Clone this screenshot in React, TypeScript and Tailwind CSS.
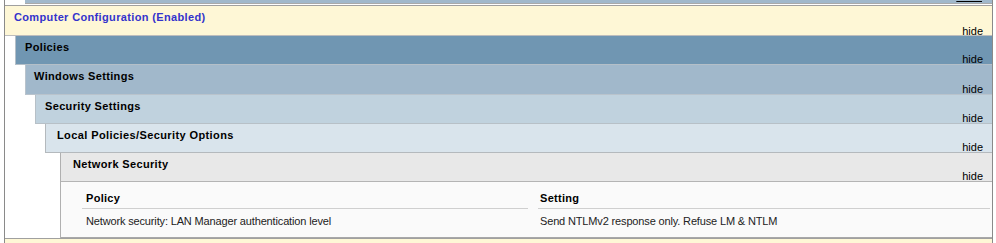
export default function App() {
  return (
    <div className="h-[243px] w-[996px] overflow-hidden bg-white font-['Liberation_Sans',Arial,sans-serif] text-[11px] text-black">
      <div className="ml-[4px] h-full w-[989px] border-x border-[#8a8a8a]">
        {/* tail of the section above */}
        <div className="ml-[20px] flex h-[4px] items-end justify-end overflow-hidden border-b border-[#a9a9a9] bg-[#a1b8cb] pr-[10px]">
          <span className="leading-[13px] underline">show</span>
        </div>
        <div className="h-[1px]" />

        {/* Computer Configuration */}
        <div className="border-t border-[#a0a0a0]">
          <div className="flex h-[30px] flex-col border-b border-[#bdbdbd] bg-[#fef7d6] pl-[9px] pr-[9px] pt-[5px]">
            <div className="font-bold leading-[13px] tracking-[0.35px] text-[#3333cc]">Computer Configuration (Enabled)</div>
            <div className="-mb-[1px] mt-auto self-end leading-[10px]">hide</div>
          </div>

          <div className="pl-[10px]">
            <div className="flex h-[29px] flex-col border-b border-l border-[#b4bfc8] bg-[#7096b2] pl-[9px] pr-[9px] pt-[5px]">
              <div className="font-bold leading-[13px] tracking-[0.35px]">Policies</div>
              <div className="mt-auto self-end leading-[10px]">hide</div>
            </div>

            <div className="pl-[10px]">
              <div className="flex h-[30px] flex-col border-b border-l border-[#b9c3cc] bg-[#a1b8cb] pl-[8px] pr-[9px] pt-[5px]">
                <div className="font-bold leading-[13px] tracking-[0.35px]">Windows Settings</div>
                <div className="mt-auto self-end leading-[10px]">hide</div>
              </div>

              <div className="pl-[10px]">
                <div className="flex h-[29px] flex-col border-b border-l border-[#b7c0c7] bg-[#c0d2de] pl-[9px] pr-[9px] pt-[5px]">
                  <div className="font-bold leading-[13px] tracking-[0.35px]">Security Settings</div>
                  <div className="mt-auto self-end leading-[10px]">hide</div>
                </div>

                <div className="pl-[10px]">
                  <div className="flex h-[29px] flex-col border-b border-l border-[#b4b9bd] bg-[#d9e4ec] pl-[11px] pr-[9px] pt-[5px]">
                    <div className="font-bold leading-[13px] tracking-[0.4px]">Local Policies/Security Options</div>
                    <div className="mt-auto self-end leading-[10px]">hide</div>
                  </div>

                  <div className="pl-[15px]">
                    <div className="border-l border-[#b0b0b0]">
                      <div className="flex h-[29px] flex-col border-b border-[#b4b4b4] bg-[#e8e8e8] pl-[12px] pr-[9px] pt-[5px]">
                        <div className="font-bold leading-[13px] tracking-[0.35px]">Network Security</div>
                        <div className="mt-auto self-end leading-[10px]">hide</div>
                      </div>

                      <div className="h-[56px] border-b border-[#a8a8a8] bg-[#fafafa] pl-[21px] pt-[10px]">
                        <div className="grid grid-cols-[446px_452px] gap-x-[10px] leading-[13px]">
                          <div className="border-b border-[#cfcfcf] pb-[3px] pl-[4px] font-bold tracking-[0.3px]">Policy</div>
                          <div className="border-b border-[#cfcfcf] pb-[3px] pl-[2px] font-bold tracking-[0.3px]">Setting</div>
                          <div className="pl-[4px] pt-[6px] tracking-[-0.15px] text-[#222]">Network security: LAN Manager authentication level</div>
                          <div className="pl-[2px] pt-[6px] tracking-[-0.15px] text-[#222]">Send NTLMv2 response only. Refuse LM &amp; NTLM</div>
                        </div>
                      </div>
                    </div>
                  </div>
                </div>
              </div>
            </div>
          </div>
        </div>

        {/* next section */}
        <div className="h-[10px] border-t border-[#a0a0a0] bg-[#fef7d6]" />
      </div>
    </div>
  );
}
